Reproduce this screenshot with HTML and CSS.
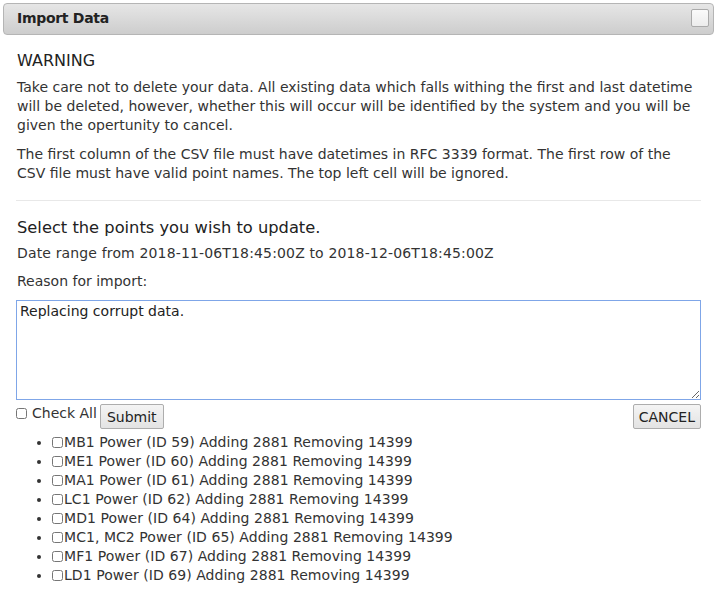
FILE: index.html
```html
<!DOCTYPE html>
<html>
<head>
<meta charset="utf-8">
<link rel="stylesheet" href="styles.css">
</head>
<body>
<div class="dialog">
  <div class="titlebar">
    <span class="title">Import Data</span>
    <button class="close" aria-label="close"></button>
  </div>
  <div class="content">
    <h3 class="warning">WARNING</h3>
    <p>Take care not to delete your data. All existing data which falls withing the first and last datetime will be deleted, however, whether this will occur will be identified by the system and you will be given the opertunity to cancel.</p>
    <p>The first column of the CSV file must have datetimes in RFC 3339 format. The first row of the CSV file must have valid point names. The top left cell will be ignored.</p>
    <hr class="rule">
    <h3 class="select">Select the points you wish to update.</h3>
    <p class="range">Date range from 2018-11-06T18:45:00Z to 2018-12-06T18:45:00Z</p>
    <p class="reason">Reason for import:</p>
    <textarea class="reason-box">Replacing corrupt data.</textarea>
    <div class="actions">
      <div class="left">
        <label class="checkall"><input type="checkbox" class="cb"> Check All</label>
        <button class="btn submit">Submit</button>
      </div>
      <button class="btn cancel">CANCEL</button>
    </div>
    <ul class="points">
      <li><input type="checkbox" class="cb small">MB1 Power (ID 59) Adding 2881 Removing 14399</li>
      <li><input type="checkbox" class="cb small">ME1 Power (ID 60) Adding 2881 Removing 14399</li>
      <li><input type="checkbox" class="cb small">MA1 Power (ID 61) Adding 2881 Removing 14399</li>
      <li><input type="checkbox" class="cb small">LC1 Power (ID 62) Adding 2881 Removing 14399</li>
      <li><input type="checkbox" class="cb small">MD1 Power (ID 64) Adding 2881 Removing 14399</li>
      <li><input type="checkbox" class="cb small">MC1, MC2 Power (ID 65) Adding 2881 Removing 14399</li>
      <li><input type="checkbox" class="cb small">MF1 Power (ID 67) Adding 2881 Removing 14399</li>
      <li><input type="checkbox" class="cb small">LD1 Power (ID 69) Adding 2881 Removing 14399</li>
    </ul>
  </div>
</div>
</body>
</html>
```
FILE: styles.css
```css
html, body {
  margin: 0;
  padding: 0;
  background: #fff;
}
body {
  font-family: "DejaVu Sans", Verdana, sans-serif;
  font-size: 14px;
  color: #333;
}
.dialog {
  padding: 3px 3px 0 3px;
}
.titlebar {
  box-sizing: border-box;
  height: 32px;
  border: 1px solid #b5b5b5;
  border-radius: 4px;
  background: linear-gradient(#e6e6e6, #cdcdcd);
  display: flex;
  align-items: center;
  justify-content: space-between;
  padding: 0 4px 2px 13px;
}
.title {
  font-weight: bold;
  font-size: 14px;
  color: #222;
  letter-spacing: -0.3px;
}
.close {
  width: 18px;
  height: 18px;
  border: 1px solid #aaa;
  border-radius: 2px;
  background: linear-gradient(#fafafa, #ececec);
  padding: 0;
}
.content {
  padding: 0 13px;
}
.warning {
  margin: 16px 0 0 1px;
  font-size: 16px;
  font-weight: normal;
  line-height: 20px;
  color: #222;
}
p {
  margin: 0;
  line-height: 19px;
  padding-left: 1px;
}
.warning + p {
  margin-top: 7px;
}
p + p {
  margin-top: 10px;
}
.rule {
  border: 0;
  border-top: 1px solid #e8e8e8;
  margin: 17px 0 0 0;
}
.select {
  margin: 17px 0 0 1px;
  font-size: 16.3px;
  font-weight: normal;
  line-height: 20px;
  color: #222;
}
.range {
  margin-top: 6px;
  letter-spacing: 0.15px;
}
.reason {
  margin-top: 9px;
}
.reason-box {
  display: block;
  box-sizing: border-box;
  width: 685px;
  height: 100px;
  margin: 9px 0 0 0;
  border: 1px solid #7fa6e8;
  font-family: "DejaVu Sans", Verdana, sans-serif;
  font-size: 14px;
  color: #222;
  padding: 2px 3px;
  resize: vertical;
  outline: none;
}
.actions {
  display: flex;
  justify-content: space-between;
  align-items: flex-start;
  margin-top: 4px;
}
.left {
  display: flex;
  align-items: flex-start;
  gap: 3px;
}
.checkall {
  display: flex;
  align-items: center;
  padding-top: 1px;
}
.cb {
  width: 11px;
  height: 11px;
  margin: 0 5px 0 0;
}
.btn {
  font-family: "DejaVu Sans", Verdana, sans-serif;
  font-size: 14px;
  color: #222;
  border: 1px solid #adadad;
  border-radius: 2px;
  background: linear-gradient(#f4f4f4, #e3e3e3);
  height: 25px;
  padding: 0 6px;
}
.cancel {
  padding: 0 5px;
}
.points {
  margin: 4px 0 0 0;
  padding-left: 36px;
}
.points li {
  line-height: 19px;
  letter-spacing: 0.05px;
}
.cb.small {
  margin: 0 1px 0 0;
  vertical-align: -1px;
}
```
